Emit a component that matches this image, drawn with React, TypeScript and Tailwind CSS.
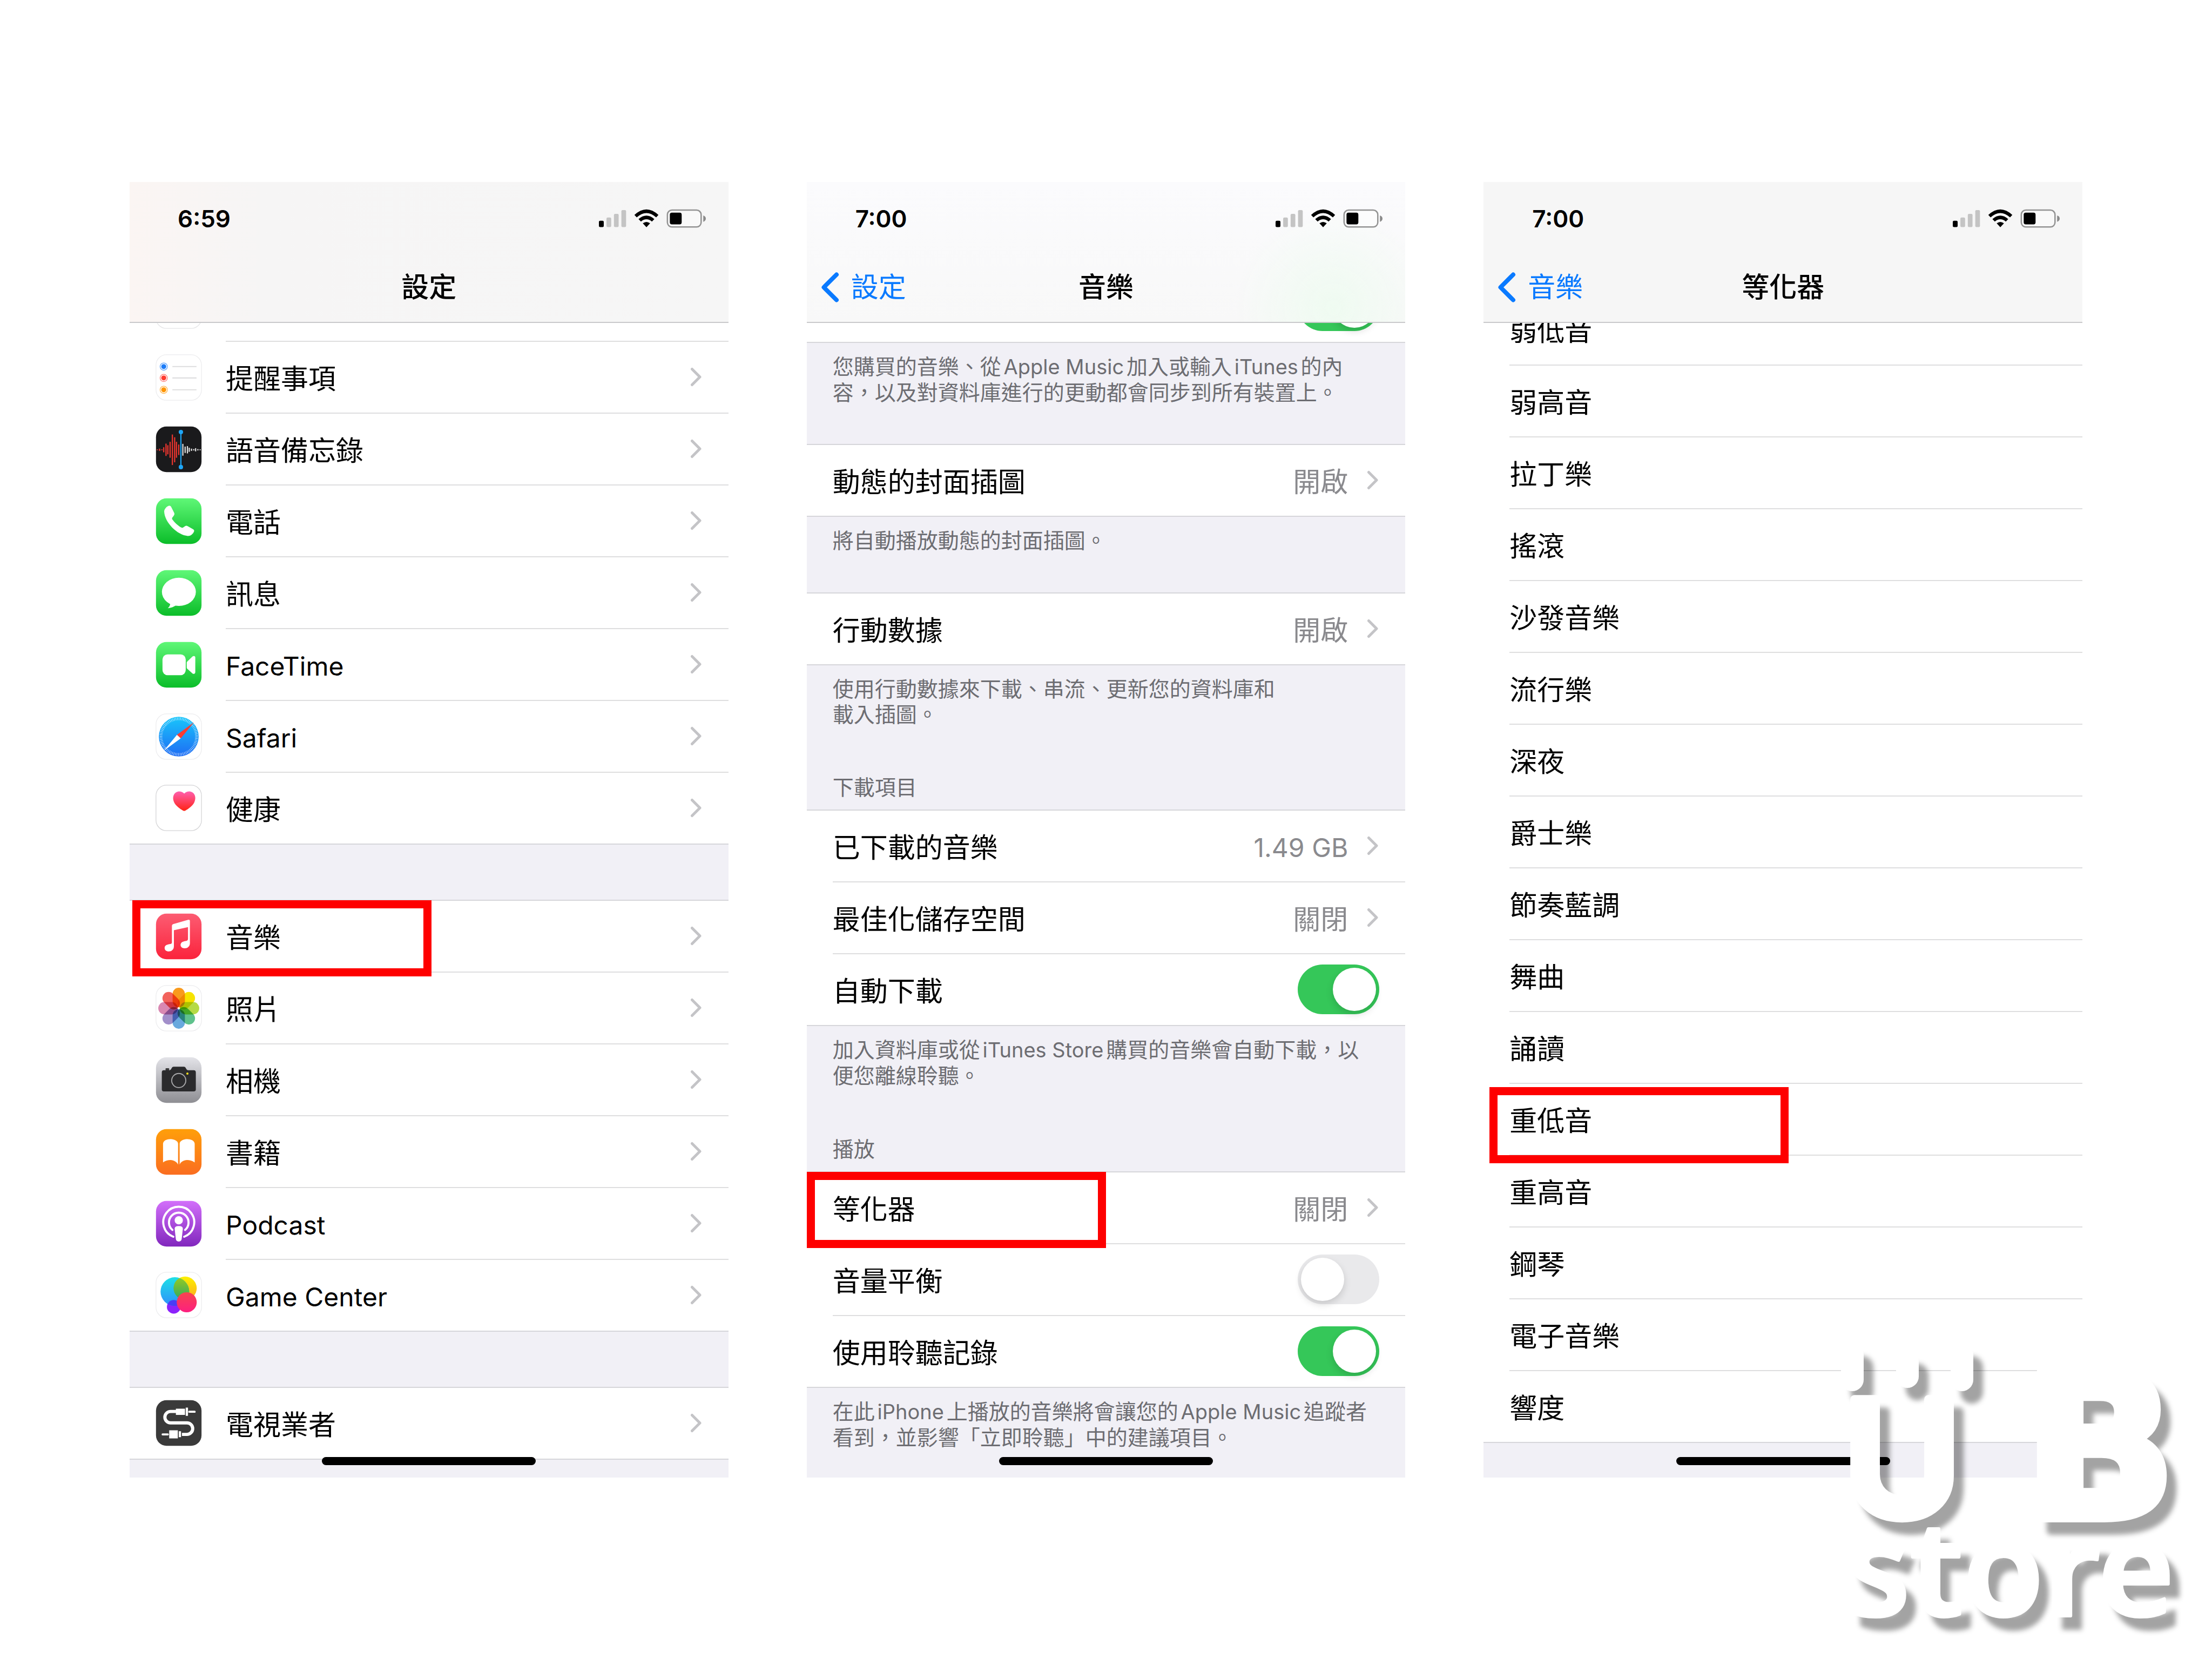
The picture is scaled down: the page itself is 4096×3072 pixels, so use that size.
import type { ReactNode } from "react";

type IconName =
    | "blank" | "reminders" | "memos" | "phone" | "messages" | "facetime" | "safari" | "health"
    | "music" | "photos" | "camera" | "books" | "podcast" | "gamecenter" | "tv";

type AppRow = { label: string; icon: IconName; latin?: boolean; marked?: boolean };

const apps: AppRow[] = [
    { label: "提醒事項", icon: "reminders" },
    { label: "語音備忘錄", icon: "memos" },
    { label: "電話", icon: "phone" },
    { label: "訊息", icon: "messages" },
    { label: "FaceTime", icon: "facetime", latin: true },
    { label: "Safari", icon: "safari", latin: true },
    { label: "健康", icon: "health" },
];

const media: AppRow[] = [
    { label: "音樂", icon: "music", marked: true },
    { label: "照片", icon: "photos" },
    { label: "相機", icon: "camera" },
    { label: "書籍", icon: "books" },
    { label: "Podcast", icon: "podcast", latin: true },
    { label: "Game Center", icon: "gamecenter", latin: true },
];

const presets = [
    "弱高音", "拉丁樂", "搖滾", "沙發音樂", "流行樂", "深夜", "爵士樂", "節奏藍調",
    "舞曲", "誦讀", "重低音", "重高音", "鋼琴", "電子音樂", "響度",
];

// [x, height] of each bar in the voice memo wave
const redBars = [[4, 2], [9, 5], [14, 2], [18, 11], [23, 27], [27, 20], [32, 35], [37, 67], [42, 55], [46, 35], [51, 23]];
const whiteBars = [[60, 26], [65, 14], [70, 16], [74, 9], [79, 5], [84, 3], [88, 7], [93, 3], [98, 2]];

const petals = ["#f99a1c", "#f6e300", "#b5da45", "#5fc28c", "#69a9de", "#a28fca", "#d988b2", "#f2635c"];

function Gradient({ id, from, to }: { id: string; from: string; to: string }) {
    return (
        <linearGradient id={id} x1="0" y1="0" x2="0" y2="1">
            <stop offset="0" stopColor={from} />
            <stop offset="1" stopColor={to} />
        </linearGradient>
    );
}

function Tile({ fill = "#fff", stroke = "none" }: { fill?: string; stroke?: string }) {
    return <rect x="1" y="1" width="100" height="100" rx="23" fill={fill} stroke={stroke} strokeWidth="1.5" />;
}

const glyphs: Record<IconName, ReactNode> = {
    blank: <Tile stroke="#e6e6e8" />,
    reminders: (
        <>
            <Tile stroke="#ececee" />
            {[["#1c7cf8", 27], ["#ff3b30", 52], ["#ff9500", 78]].map(([color, y]) => (
                <g key={color}>
                    <circle cx="18" cy={y} r="8" fill="none" stroke={String(color)} strokeWidth="1.5" opacity="0.7" />
                    <circle cx="18" cy={y} r="5.5" fill={String(color)} />
                    <path d={`M37 ${y}H90`} stroke="#dededf" strokeWidth="2.5" />
                </g>
            ))}
        </>
    ),
    memos: (
        <>
            <Tile fill="#1a1a1c" />
            {redBars.map(([x, h]) => <path key={x} d={`M${x} ${52 - h / 2}v${h}`} stroke="#f0362f" strokeWidth="2.6" />)}
            {whiteBars.map(([x, h]) => <path key={x} d={`M${x} ${52 - h / 2}v${h}`} stroke="#e4e4e4" strokeWidth="2.6" />)}
            <path d="M55.7 13V90" stroke="#1ea7f8" strokeWidth="2.6" />
            <circle cx="55.7" cy="13" r="4.8" fill="#1ea7f8" />
            <circle cx="55.7" cy="90" r="4.8" fill="#1ea7f8" />
        </>
    ),
    phone: (
        <>
            <Gradient id="g-phone" from="#5ff777" to="#0bbd29" />
            <Tile fill="url(#g-phone)" />
            <path fill="#fff" d="M19 30C19 25 24 19 28.5 17.5C31 16.7 32.5 17 34 19L41 33C42 35.5 41.5 37 40 39L37 43C36 44.5 36 46 37 47.5C42 54 49 61 56.5 65C58 66 59.5 65.5 61 64.5L65 62C67 60.8 68.5 61 70.5 62L83 69C85 70.3 85.3 72 84.3 74C82 79.5 77 83.5 71 83.5C48 82 20 54 19 30Z" />
        </>
    ),
    messages: (
        <>
            <Gradient id="g-msg" from="#5ff777" to="#0bbd29" />
            <Tile fill="url(#g-msg)" />
            <ellipse cx="51.3" cy="48.6" rx="37.3" ry="31" fill="#fff" />
            <path d="M32 70C33 77 31 81 27 84.5C34 84 40 81.5 45 78Z" fill="#fff" />
        </>
    ),
    facetime: (
        <>
            <Gradient id="g-ft" from="#5ff777" to="#0bbd29" />
            <Tile fill="url(#g-ft)" />
            <rect x="15.3" y="28.2" width="51" height="45.5" rx="11" fill="#fff" />
            <path d="M68.5 47C68.5 45.5 69 44.5 70 43.5L81 33C83.5 31 87.3 31 87.3 35V67C87.3 71 83.5 72 81 70L70 60C69 59 68.5 58 68.5 56.5Z" fill="#fff" />
        </>
    ),
    safari: (
        <>
            <Gradient id="g-saf" from="#19c6fb" to="#1e6cf4" />
            <Tile stroke="#ececee" />
            <circle cx="51" cy="51" r="43.7" fill="url(#g-saf)" />
            <circle cx="51" cy="51" r="39" fill="none" stroke="#fff" strokeWidth="6" strokeDasharray="1 2.4" opacity="0.8" />
            <path d="M84.5 19.5L55.3 55L47 47Z" fill="#ff3b30" />
            <path d="M18 82L47 47L55.3 55Z" fill="#fff" />
        </>
    ),
    health: (
        <>
            <Gradient id="g-heart" from="#ff5fae" to="#ff2314" />
            <Tile stroke="#d4d4d6" />
            <path fill="url(#g-heart)" d="M63 19.5C58 14 50 13.5 45 17C38 21.5 37 31 41 39C45 47 54 53 60 56.5Q63 58.5 66 56.5C72 53 81 47 85 39C89 31 88 21.5 81 17C76 13.5 68 14 63 19.5Z" />
        </>
    ),
    music: (
        <>
            <Gradient id="g-mus" from="#fc5c72" to="#fb233c" />
            <Tile fill="url(#g-mus)" />
            <path fill="#fff" d="M36 28Q36 24.5 39.5 23.6L71.5 14.5Q75.5 13.5 75.5 17.5V66C75.5 73 70 77 64 77C58.5 77 55 74 55 70C55 65 59 62.5 64 61.5L68 60.8Q71.3 60 71.3 57V30.5L40.3 37.5V73C40.3 80 35 84 29 84C23.5 84 20 81 20 76.5C20 72 23.5 69.3 29 68.3L32.5 67.7Q36 67 36 64Z" />
        </>
    ),
    photos: (
        <>
            <Tile stroke="#ececee" />
            <g transform="translate(51 51)">
                {petals.map((color, i) => (
                    <rect key={color} x="-13.5" y="-45" width="27" height="43" rx="13.5" fill={color} transform={`rotate(${i * 45})`} className="mix-blend-multiply" />
                ))}
                <circle r="2.5" fill="#fff" />
            </g>
        </>
    ),
    camera: (
        <>
            <Gradient id="g-cam" from="#e3e3e8" to="#8e8e93" />
            <Tile fill="url(#g-cam)" />
            <rect x="22" y="25" width="8" height="5" rx="1.5" fill="#39393b" />
            <path fill="#2b2b2d" d="M18 29.5H29C32 29.5 34 28 35 25.5Q36.5 21.5 40 21.5H62Q65.5 21.5 67 25.5C68 28 70 29.5 73 29.5H84Q88.5 29.5 88.5 34V71.5Q88.5 76 84 76H18Q13.8 76 13.8 71.5V34Q13.8 29.5 18 29.5Z" />
            <circle cx="51" cy="52" r="15.5" fill="none" stroke="#a9a9ab" strokeWidth="2.2" />
            <circle cx="70" cy="36.7" r="2.4" fill="#f7e01f" />
        </>
    ),
    books: (
        <>
            <Gradient id="g-book" from="#ff9f0a" to="#fa6d20" />
            <Tile fill="url(#g-book)" />
            <path fill="#fff" d="M16.5 33C17 26 25 22.8 33 22.8C41 22.8 49.5 27 49.5 33V79C47 73 40 68.8 33 68.8C27 68.8 22 70 16.5 74Z" />
            <path fill="#fff" d="M53 33C53 27 61 22.8 69 22.8C77 22.8 85.5 26 86 33V74C80 70 75 68.8 69 68.8C62 68.8 55 73 53 79Z" />
        </>
    ),
    podcast: (
        <>
            <Gradient id="g-pod" from="#d26ffa" to="#8127bd" />
            <Tile fill="url(#g-pod)" />
            <g fill="none" stroke="#fff" strokeWidth="4.6" strokeLinecap="round">
                <path d="M39 79.5A34 34 0 1 1 63 79.5" />
                <path d="M37 64.5A21.5 21.5 0 1 1 65 64.5" />
            </g>
            <circle cx="51" cy="43.5" r="9" fill="#fff" />
            <path d="M42 62Q42 56 51 56Q60 56 60 62L57.5 84Q57 90 51 90Q45 90 44.5 84Z" fill="#fff" />
        </>
    ),
    gamecenter: (
        <>
            <Gradient id="g-blue" from="#1ee0e6" to="#2e90fb" />
            <Gradient id="g-yellow" from="#fdf100" to="#fbab20" />
            <Gradient id="g-green" from="#9bcb20" to="#2fa860" />
            <Gradient id="g-red" from="#f8444e" to="#fd1f80" />
            <clipPath id="c-blue"><circle cx="42.5" cy="43.5" r="31.5" /></clipPath>
            <Tile stroke="#ececee" />
            <circle cx="40" cy="77" r="15" fill="#8c22fb" />
            <circle cx="65" cy="36" r="25.5" fill="url(#g-yellow)" />
            <circle cx="42.5" cy="43.5" r="31.5" fill="url(#g-blue)" />
            <g clipPath="url(#c-blue)">
                <circle cx="65" cy="36" r="25.5" fill="url(#g-green)" />
                <circle cx="40" cy="77" r="15" fill="#4a3cf5" />
            </g>
            <circle cx="68.5" cy="67" r="22" fill="url(#g-red)" />
        </>
    ),
    tv: (
        <>
            <Tile fill="#3a3a3a" />
            <path d="M46 25.7H33A12.5 12.5 0 0 0 33 50.7H69A12.6 12.6 0 0 1 69 76H58" fill="none" stroke="#fff" strokeWidth="7" />
            <path fill="#fff" d="M44.7 19.7h20v13.5h-20zM66.3 17.3h5v18h-5zM30 67h19v17.7h-19zM51 69h5v13h-5z" />
            <path d="M74 26.3H86M15.5 76H27" stroke="#fff" strokeWidth="4.4" strokeLinecap="round" />
        </>
    ),
};

function AppIcon({ name }: { name: IconName }) {
    return (
        <svg viewBox="0 0 102 102" className="isolate size-[86px] shrink-0" aria-hidden="true">
            {glyphs[name]}
        </svg>
    );
}

function Chevron() {
    return (
        <svg viewBox="0 0 22 36" className="h-9 w-[22px] shrink-0" aria-hidden="true">
            <path d="M2.5 3.5L17 18L2.5 32.5" fill="none" stroke="#c4c4c7" strokeWidth="5" strokeLinecap="round" strokeLinejoin="round" />
        </svg>
    );
}

function StatusIcons() {
    return (
        <svg viewBox="111 58 704 124" className="h-[35px] w-[198px]" aria-hidden="true">
            <rect x="111" y="135" width="32" height="42" rx="8" />
            <g fill="#c4c4c4">
                <rect x="161" y="114" width="31" height="63" rx="8" />
                <rect x="210" y="90" width="31" height="87" rx="8" />
                <rect x="259" y="65" width="31" height="112" rx="8" />
            </g>
            <path d="M345 97Q424 24 503 97L488 113Q424 55 360 113Z" />
            <path d="M372 124Q424 78 476 124L460 140Q424 110 388 140Z" />
            <path d="M400 152Q424 134 448 152L424 178Z" />
            <rect x="562" y="65" width="222" height="111" rx="30" fill="#fff" fillOpacity="0.4" stroke="#939393" strokeWidth="9" />
            <rect x="578" y="82" width="78" height="77" rx="13" />
            <path d="M798 100Q815 106 815 121Q815 136 798 142Z" fill="#8a8a8a" />
        </svg>
    );
}

type ScreenProps = { time: string; title: string; back?: string; headerClass: string; children: ReactNode };

function Screen({ time, title, back, headerClass, children }: ScreenProps) {
    return (
        <section className="relative flex min-w-0 flex-1 flex-col overflow-hidden bg-[#f1f0f6]">
            <header className={`border-b-2 border-[#c9c9cb] ${headerClass}`}>
                <div className="flex h-[130px] items-center justify-between pt-1.5 pr-[42px]">
                    <span className="w-[276px] text-center text-[44px] font-semibold">{time}</span>
                    <StatusIcons />
                </div>
                <div className="grid h-[129px] grid-cols-3 items-center pt-0.5">
                    <div className="pl-6">
                        {back && (
                            <a href="#" className="flex items-center gap-5 text-[#0a7aff]">
                                <svg viewBox="0 0 38 58" className="h-[58px] w-[38px]" aria-hidden="true">
                                    <path d="M31 5.5L7.5 29L31 52.5" fill="none" stroke="currentColor" strokeWidth="8" strokeLinecap="round" strokeLinejoin="round" />
                                </svg>
                                {back}
                            </a>
                        )}
                    </div>
                    <h1 className="text-center font-medium">{title}</h1>
                </div>
            </header>
            {children}
            <div className="absolute bottom-[23px] left-1/2 h-[15px] w-[396px] -translate-x-1/2 rounded-full bg-black" />
        </section>
    );
}

// A group whose first row has scrolled partly under the header
function Clipped({ className, children }: { className: string; children: ReactNode }) {
    return <div className={`flex shrink-0 flex-col justify-end overflow-hidden bg-white ${className}`}>{children}</div>;
}

function Marker({ className }: { className: string }) {
    return <div className={`pointer-events-none absolute z-10 h-[141px] w-[554px] border-[15px] border-[#fe0000] ${className}`} />;
}

function AppItem({ row, last }: { row: AppRow; last?: boolean }) {
    return (
        <li className={`relative bg-white ${last ? "border-b-2 border-[#d6d6da]" : ""}`}>
            <a href="#" className={`flex items-center gap-11 pl-12 ${last ? "h-[131px]" : "h-[133px]"}`}>
                <AppIcon name={row.icon} />
                <span className={`flex h-full flex-1 items-center justify-between pr-12 ${last ? "" : "border-b-2 border-[#dededf]"}`}>
                    <span className={`pt-2 ${row.latin ? "text-[48px]" : ""}`}>{row.label}</span>
                    {row.label && <Chevron />}
                </span>
            </a>
            {row.marked && <Marker className="-top-px left-[5px]" />}
        </li>
    );
}

function AppList({ rows }: { rows: AppRow[] }) {
    return (
        <ul>
            {rows.map((row, i) => <AppItem key={row.label} row={row} last={i === rows.length - 1} />)}
        </ul>
    );
}

type RowProps = { label: string; last?: boolean; marker?: string; children?: ReactNode };

function Row({ label, last, marker, children }: RowProps) {
    return (
        <li className={`relative shrink-0 bg-white ${last ? "border-b-2 border-[#d6d6da]" : "pl-12"}`}>
            <div className={`flex items-center justify-between pr-12 ${last ? "h-[131px] pl-12" : "h-[133px] border-b-2 border-[#dededf]"}`}>
                <span className="pt-2">{label}</span>
                {children}
            </div>
            {marker && <Marker className={marker} />}
        </li>
    );
}

function Value({ latin, children }: { latin?: boolean; children: ReactNode }) {
    return (
        <button type="button" className="flex items-center gap-9 text-[#8a8a8e]">
            <span className={`pt-2 ${latin ? "text-[48px]" : ""}`}>{children}</span>
            <Chevron />
        </button>
    );
}

function Toggle({ label, on }: { label: string; on?: boolean }) {
    return (
        <input
            type="checkbox"
            aria-label={label}
            defaultChecked={on}
            className="flex h-[92px] w-[151px] shrink-0 appearance-none items-center rounded-full bg-[#e9e9eb] px-1.5 before:size-20 before:rounded-full before:bg-white before:shadow-[0_6px_14px_rgba(0,0,0,0.15)] checked:justify-end checked:bg-[#35c759]"
        />
    );
}

function Note({ className, heading, children }: { className: string; heading?: string; children: ReactNode }) {
    return (
        <div className={`flex shrink-0 flex-col justify-between border-[#d6d6da] px-12 pt-5 pb-[18px] text-[39px] leading-[47px] text-[#6d6d72] ${className}`}>
            <p className="whitespace-nowrap [text-autospace:normal]">{children}</p>
            {heading && <h2>{heading}</h2>}
        </div>
    );
}

function Latin({ children }: { children: ReactNode }) {
    return <span className="text-[38px]">{children}</span>;
}

function Watermark() {
    return (
        <svg viewBox="3390 2480 706 592" className="pointer-events-none absolute right-0 bottom-0 z-20 h-[592px] w-[706px] overflow-visible drop-shadow-[18px_23px_5px_rgba(0,0,0,0.36)]">
            <g fill="#fff" stroke="#fff" strokeLinejoin="round" textAnchor="middle">
                <rect x="3409" y="2488" width="42" height="88" rx="21" stroke="none" />
                <rect x="3511" y="2502" width="42" height="68" rx="21" stroke="none" />
                <rect x="3612" y="2488" width="42" height="88" rx="21" stroke="none" />
                <text x="3522" y="2808" fontSize="298" fontWeight="600" strokeWidth="16" fontFamily="Inter, sans-serif">U</text>
                <text x="3888" y="2811" fontSize="374" fontWeight="700" strokeWidth="16" fontFamily="DejaVu Sans, sans-serif">B</text>
                <text x="3722" y="2992" fontSize="242" fontWeight="600" strokeWidth="6" fontFamily="Noto Sans, sans-serif">store</text>
            </g>
        </svg>
    );
}

export default function App() {
    return (
        <main
            lang="zh-Hant"
            className="relative flex min-h-screen flex-col justify-center overflow-hidden bg-white px-[240px] font-[Inter,'Noto_Sans_CJK_TC',sans-serif] text-[51px] leading-[60px] text-black"
        >
            <div className="flex gap-[145px]">
                <Screen time="6:59" title="設定" headerClass="bg-[linear-gradient(90deg,#fbf5f3_0%,#f6f5f5_22%,#f6f6f6_100%)]">
                    <Clipped className="h-[35px]">
                        <ul>
                            <AppItem row={{ label: "", icon: "blank" }} />
                        </ul>
                    </Clipped>
                    <AppList rows={apps} />
                    <div className="h-[104px] border-b-2 border-[#d6d6da]" />
                    <AppList rows={media} />
                    <div className="h-[104px] border-b-2 border-[#d6d6da]" />
                    <AppList rows={[{ label: "電視業者", icon: "tv" }]} />
                    <div className="h-[33px]" />
                </Screen>

                <Screen time="7:00" title="音樂" back="設定" headerClass="bg-[radial-gradient(circle_at_88%_90%,#effbf1_0%,transparent_18%),linear-gradient(#fbfbfd,#f8f8f8)]">
                    <Clipped className="h-[37px]">
                        <ul>
                            <Row label="" last><Toggle label="同步資料庫" on /></Row>
                        </ul>
                    </Clipped>
                    <Note className="h-[189px] border-b-2">您購買的音樂、從<Latin>Apple Music</Latin>加入或輸入<Latin>iTunes</Latin>的內<br />容，以及對資料庫進行的更動都會同步到所有裝置上。</Note>
                    <ul>
                        <Row label="動態的封面插圖" last><Value>開啟</Value></Row>
                    </ul>
                    <Note className="h-[142px] border-b-2">將自動播放動態的封面插圖。</Note>
                    <ul>
                        <Row label="行動數據" last><Value>開啟</Value></Row>
                    </ul>
                    <Note className="h-[269px] border-b-2" heading="下載項目">使用行動數據來下載、串流、更新您的資料庫和<br />載入插圖。</Note>
                    <ul>
                        <Row label="已下載的音樂"><Value latin>1.49 GB</Value></Row>
                        <Row label="最佳化儲存空間"><Value>關閉</Value></Row>
                        <Row label="自動下載" last><Toggle label="自動下載" on /></Row>
                    </ul>
                    <Note className="h-[271px] border-b-2" heading="播放">加入資料庫或從<Latin>iTunes Store</Latin>購買的音樂會自動下載，以<br />便您離線聆聽。</Note>
                    <ul>
                        <Row label="等化器" marker="-top-px left-0"><Value>關閉</Value></Row>
                        <Row label="音量平衡"><Toggle label="音量平衡" /></Row>
                        <Row label="使用聆聽記錄" last><Toggle label="使用聆聽記錄" on /></Row>
                    </ul>
                    <Note className="flex-1">在此<Latin>iPhone</Latin>上播放的音樂將會讓您的<Latin>Apple Music</Latin>追蹤者<br />看到，並影響「立即聆聽」中的建議項目。</Note>
                </Screen>

                <Screen time="7:00" title="等化器" back="音樂" headerClass="bg-[#f6f6f6]">
                    <Clipped className="h-[79px]">
                        <ul>
                            <Row label="弱低音" />
                        </ul>
                    </Clipped>
                    <ul>
                        {presets.map((name, i) => (
                            <Row key={name} label={name} last={i === presets.length - 1} marker={name === "重低音" ? "top-1.5 left-[11px]" : undefined} />
                        ))}
                    </ul>
                </Screen>
            </div>
            <Watermark />
        </main>
    );
}
